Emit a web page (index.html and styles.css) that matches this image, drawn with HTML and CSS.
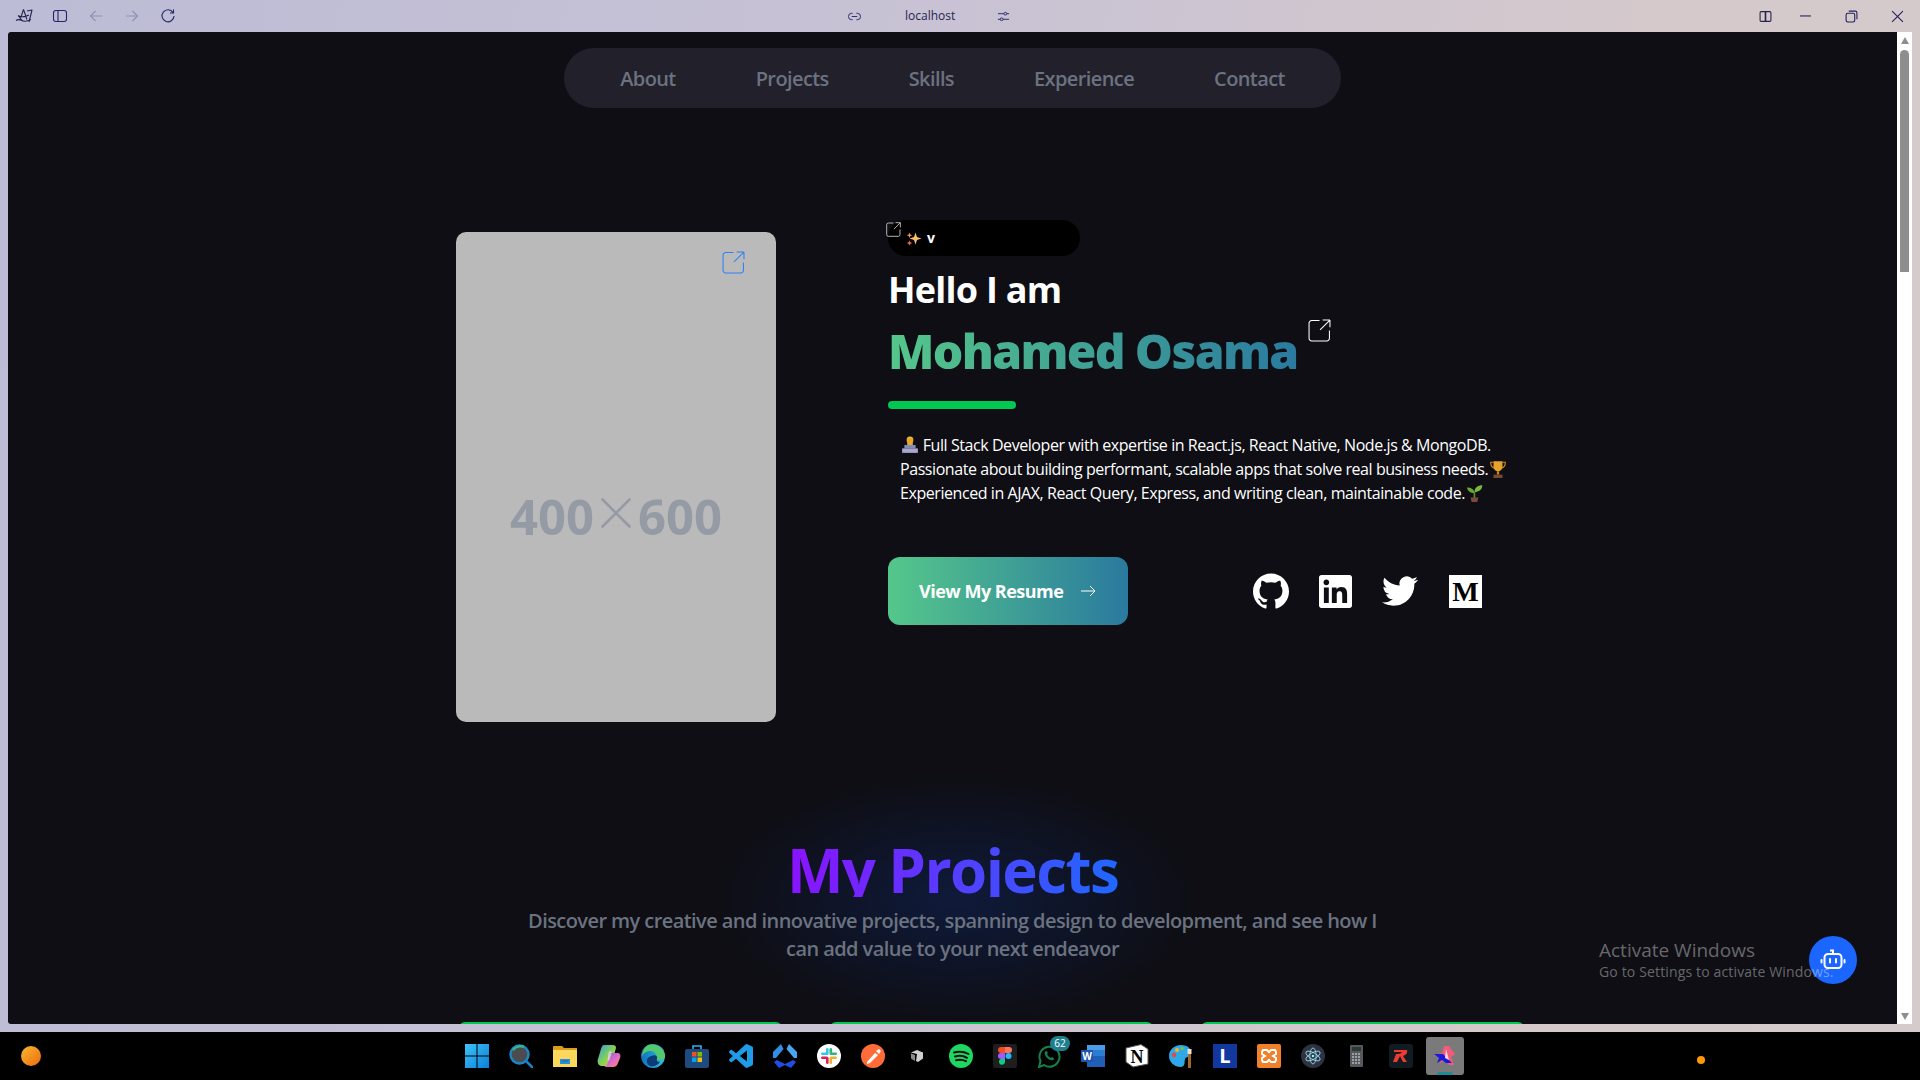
FILE: index.html
```html
<!DOCTYPE html>
<html lang="en">
<head>
<meta charset="utf-8">
<title>Mohamed Osama</title>
<link rel="stylesheet" href="styles.css">
</head>
<body>
<div class="window">
  <header class="titlebar">
    <div class="tb-left">
      <span class="tcell"><svg class="ti-logo" viewBox="0 0 18 16"><path d="M1 12.500c2-1.500 4-1 6 0s5 1 9-1M3 7.500l5 6M8.500 1.500L5 12M8.500 1.500l3.500 10M12 3l5-1-3 12M3 7.500c3 2 6 2 11-.5" fill="none" stroke="#25254f" stroke-width="1.100" stroke-linejoin="round"/></svg></span>
      <span class="tcell"><svg class="ti" viewBox="0 0 16 16"><rect x="1.500" y="2.500" width="13" height="11" rx="2.500" fill="none" stroke="#25256a" stroke-width="1.100"/><path d="M6 2.500v11" stroke="#25256a" stroke-width="1.100"/></svg></span>
      <span class="tcell"><svg class="ti" viewBox="0 0 16 16"><path d="M14 8H2.500M7.500 3L2.500 8l5 5" fill="none" stroke="#8f8fb5" stroke-width="1.100"/></svg></span>
      <span class="tcell"><svg class="ti" viewBox="0 0 16 16"><path d="M2 8h11.500M8.500 3l5 5-5 5" fill="none" stroke="#8f8fb5" stroke-width="1.100"/></svg></span>
      <span class="tcell"><svg class="ti" viewBox="0 0 16 16"><path d="M13 4.500A6 6 0 1 0 14 8M13.500 1.500v3.500H10" fill="none" stroke="#25256a" stroke-width="1.100"/></svg></span>
    </div>
    <div class="tb-center">
      <svg class="ti-s" viewBox="0 0 14 14"><path d="M5 3.500H4a3.500 3.500 0 0 0 0 7h1M9 3.500h1a3.500 3.500 0 0 1 0 7H9M4 7h6" fill="none" stroke="#25256a" stroke-width="1"/></svg>
      <span class="host">localhost</span>
      <svg class="ti-s" viewBox="0 0 14 14"><path d="M1 4h6.500M10.500 4H13M1 10h2.500M6.500 10H13" stroke="#25256a" stroke-width="1"/><circle cx="9" cy="4" r="1.500" fill="none" stroke="#25256a"/><circle cx="5" cy="10" r="1.500" fill="none" stroke="#25256a"/></svg>
    </div>
    <div class="tb-right">
      <span class="wcell wcell-first"><svg class="ti-s" viewBox="0 0 12 12"><rect x="1" y="1.500" width="10" height="9" rx="1" fill="none" stroke="#25254f"/><path d="M6 1.500v9" stroke="#25254f" stroke-width="1.500"/></svg></span>
      <span class="wcell"><svg class="ti-s" viewBox="0 0 12 12"><path d="M1 5.500h10" stroke="#20205f"/></svg></span>
      <span class="wcell"><svg class="ti-s" viewBox="0 0 12 12"><rect x="1" y="3" width="8" height="8" rx="1.500" fill="none" stroke="#20205f"/><path d="M3.500 1h6a1.500 1.500 0 0 1 1.500 1.500v6" fill="none" stroke="#20205f"/></svg></span>
      <span class="wcell"><svg class="ti-s" viewBox="0 0 12 12"><path d="M1 1l10 10M11 1L1 11" stroke="#20205f"/></svg></span>
    </div>
  </header>

  <div class="frame">
    <div class="viewport">
      <nav class="nav">
        <a>About</a><a>Projects</a><a>Skills</a><a>Experience</a><a>Contact</a>
      </nav>

      <section class="hero">
        <div class="photo">
          <svg class="ext ext-photo" viewBox="0 0 22 22"><path d="M11 1.500H3.500a2.500 2.500 0 0 0-2.500 2.500v14.500a2.500 2.500 0 0 0 2.500 2.500h14.500a2.500 2.500 0 0 0 2.500-2.500V11M21 1h-7M21 1v7M21 1L11.500 10.500" fill="none" stroke="#2f80f5" stroke-width="1"/></svg>
          <div class="ph-text"><span>400</span><svg class="ph-x" viewBox="0 0 30 30"><path d="M1.500 1.500l27 27M28.500 1.500l-27 27" stroke="#959ba5" stroke-width="2.600" stroke-linecap="round"/></svg><span>600</span></div>
        </div>
        <div class="intro">
          <div class="badge">
            <svg class="ext ext-badge" viewBox="0 0 22 22"><path d="M11 1.500H3.500a2.500 2.500 0 0 0-2.500 2.500v14.500a2.500 2.500 0 0 0 2.500 2.500h14.500a2.500 2.500 0 0 0 2.500-2.500V11M21 1h-7M21 1v7M21 1L11.500 10.500" fill="none" stroke="#c9c9c9" stroke-width="1.300"/></svg>
            <svg class="sparkle" viewBox="0 0 16 14"><path d="M9.500 1l1.500 4.500L15.500 7l-4.500 1.500L9.500 13 8 8.500 3.500 7 8 5.500z" fill="#fbbf6a"/><path d="M3.500 1l.8 2 2 .8-2 .8-.8 2-.8-2-2-.8 2-.8z" fill="#f5955a"/><path d="M3.500 9l.8 1.800 1.800.8-1.800.8-.8 1.600-.8-1.600-1.800-.8 1.800-.8z" fill="#f26f45"/></svg>
            <span class="badge-text">v</span>
          </div>
          <h2 class="hello">Hello I am</h2>
          <div class="name-row">
            <h1 class="name">Mohamed Osama</h1>
            <svg class="ext ext-name" viewBox="0 0 22 22"><path d="M11 1.500H3.500a2.500 2.500 0 0 0-2.500 2.500v14.500a2.500 2.500 0 0 0 2.500 2.500h14.500a2.500 2.500 0 0 0 2.500-2.500V11M21 1h-7M21 1v7M21 1L11.500 10.500" fill="none" stroke="#fff" stroke-width="1"/></svg>
          </div>
          <div class="rule"></div>
          <p class="bio">
            <span class="line"><svg class="emoji" viewBox="0 0 16 16"><circle cx="8" cy="3.500" r="3" fill="#f0b83c"/><path d="M5.500 2h5v6h-5z" fill="#e8a62c"/><path d="M3 8h10v3H3z" fill="#7d8fb5"/><path d="M1 11h14v4H1z" fill="#a9a6cf"/></svg> Full Stack Developer with expertise in React.js, React Native, Node.js &amp; MongoDB.</span>
            <span class="line">Passionate about building performant, scalable apps that solve real business needs.<svg class="emoji" viewBox="0 0 16 16"><path d="M4 1h8v5a4 4 0 0 1-8 0z" fill="#e8a32a"/><path d="M4 2H1.500c0 3 1 4.500 3 5M12 2h2.500c0 3-1 4.500-3 5" fill="none" stroke="#d18d20"/><path d="M7 10h2v3H7z" fill="#c98a20"/><path d="M4 13h8v3H4z" fill="#7a4a30"/></svg></span>
            <span class="line">Experienced in AJAX, React Query, Express, and writing clean, maintainable code.<svg class="emoji" viewBox="0 0 16 16"><path d="M7.500 13V7" stroke="#5e8a2c" stroke-width="1.500"/><path d="M7.500 8C7 4 4 3 1 3c0 3 3 5 6.500 5z" fill="#6aa52e"/><path d="M7.500 7c0-4 3-6 7-6 0 4-3 6-7 6z" fill="#7cb838"/><path d="M4 12h7l-1 4H5z" fill="#7a4a3a"/></svg></span>
          </p>
          <div class="actions">
            <a class="resume">View My Resume<svg class="arrow" viewBox="0 0 16 12"><path d="M1 6h14M10 1l5 5-5 5" fill="none" stroke="#fff" stroke-width="1"/></svg></a>
            <div class="socials">
              <svg class="soc soc-gh" viewBox="0 0 24 24"><path fill="#fff" d="M12 .297c-6.63 0-12 5.373-12 12 0 5.303 3.438 9.8 8.205 11.385.6.113.82-.258.82-.577 0-.285-.01-1.04-.015-2.04-3.338.724-4.042-1.61-4.042-1.61C4.422 18.07 3.633 17.7 3.633 17.7c-1.087-.744.084-.729.084-.729 1.205.084 1.838 1.236 1.838 1.236 1.07 1.835 2.809 1.305 3.495.998.108-.776.417-1.305.76-1.605-2.665-.3-5.466-1.332-5.466-5.93 0-1.31.465-2.38 1.235-3.22-.135-.303-.54-1.523.105-3.176 0 0 1.005-.322 3.3 1.23.96-.267 1.98-.399 3-.405 1.02.006 2.04.138 3 .405 2.28-1.552 3.285-1.23 3.285-1.23.645 1.653.24 2.873.12 3.176.765.84 1.23 1.91 1.23 3.22 0 4.61-2.805 5.625-5.475 5.92.42.36.81 1.096.81 2.22 0 1.606-.015 2.896-.015 3.286 0 .315.21.69.825.57C20.565 22.092 24 17.592 24 12.297c0-6.627-5.373-12-12-12"/></svg>
              <svg class="soc soc-in" viewBox="0 0 24 24"><path fill="#fff" d="M20.447 20.452h-3.554v-5.569c0-1.328-.027-3.037-1.852-3.037-1.853 0-2.136 1.445-2.136 2.939v5.667H9.351V9h3.414v1.561h.046c.477-.9 1.637-1.85 3.37-1.85 3.601 0 4.267 2.37 4.267 5.455v6.286zM5.337 7.433c-1.144 0-2.063-.926-2.063-2.065 0-1.138.92-2.063 2.063-2.063 1.14 0 2.064.925 2.064 2.063 0 1.139-.925 2.065-2.064 2.065zm1.782 13.019H3.555V9h3.564v11.452zM22.225 0H1.771C.792 0 0 .774 0 1.729v20.542C0 23.227.792 24 1.771 24h20.451C23.2 24 24 23.227 24 22.271V1.729C24 .774 23.2 0 22.222 0h.003z"/></svg>
              <svg class="soc soc-tw" viewBox="0 0 24 24"><path fill="#fff" d="M23.953 4.57a10 10 0 01-2.825.775 4.958 4.958 0 002.163-2.723c-.951.555-2.005.959-3.127 1.184a4.92 4.92 0 00-8.384 4.482C7.69 8.095 4.067 6.13 1.64 3.162a4.822 4.822 0 00-.666 2.475c0 1.71.87 3.213 2.188 4.096a4.904 4.904 0 01-2.228-.616v.06a4.923 4.923 0 003.946 4.827 4.996 4.996 0 01-2.212.085 4.936 4.936 0 004.604 3.417 9.867 9.867 0 01-6.102 2.105c-.39 0-.779-.023-1.17-.067a13.995 13.995 0 007.557 2.209c9.053 0 13.998-7.496 13.998-13.985 0-.21 0-.42-.015-.63A9.935 9.935 0 0024 4.59z"/></svg>
              <span class="soc-md">M</span>
            </div>
          </div>
        </div>
      </section>

      <section class="projects">
        <h2 class="proj-title">My Projects</h2>
        <p class="proj-sub">Discover my creative and innovative projects, spanning design to development, and see how I<br>can add value to your next endeavor</p>
        <div class="cards"><div class="card"></div><div class="card"></div><div class="card"></div></div>
      </section>

      <button class="bot" aria-label="Assistant"><svg viewBox="0 0 28 28"><path d="M14 8V4.500h-3" fill="none" stroke="#fff" stroke-width="2"/><rect x="5.500" y="8" width="17" height="14" rx="3.500" fill="none" stroke="#fff" stroke-width="2"/><path d="M11 13v3.500M17 13v3.500M2.500 14v2.500M25.500 14v2.500" stroke="#fff" stroke-width="2" stroke-linecap="round"/></svg></button>
      <div class="watermark"><div class="wm1">Activate Windows</div><div class="wm2">Go to Settings to activate Windows.</div></div>
    </div>
    <div class="scrollbar">
      <span class="sb-up"></span>
      <span class="sb-thumb"></span>
      <span class="sb-down"></span>
    </div>
  </div>
</div>

<footer class="taskbar">
  <span class="orb"></span>
  <div class="apps">
    <span class="app"><svg viewBox="0 0 24 24"><defs><linearGradient id="win" x1="0" y1="0" x2="1" y2="1"><stop offset="0" stop-color="#3fc3f7"/><stop offset="1" stop-color="#0a7fd8"/></linearGradient></defs><path fill="url(#win)" d="M0 0h11.500v11.500H0zM12.500 0H24v11.500H12.500zM0 12.500h11.500V24H0zM12.500 12.500H24V24H12.500z"/></svg></span>
    <span class="app"><svg viewBox="0 0 24 24"><circle cx="10.500" cy="10.500" r="9" fill="#4b4b50" stroke="#1b86c8" stroke-width="2.400"/><path d="M4 6a9 9 0 0 1 11-3" fill="none" stroke="#35b88a" stroke-width="2.400"/><path d="M17 17l6 6" stroke="#1b7fc0" stroke-width="2.600" stroke-linecap="round"/></svg></span>
    <span class="app"><svg viewBox="0 0 24 24"><path d="M0 3a1 1 0 0 1 1-1h8l2 2h13v4H0z" fill="#d69e1a"/><path d="M0 6h24v17H0z" fill="#fbd75b"/><path d="M7 15h10v5H7z" fill="#2b8fd8"/><path d="M9 17h6" stroke="#156bb0"/></svg></span>
    <span class="app"><svg viewBox="0 0 24 24"><defs><linearGradient id="cop" x1="0" y1="0" x2="1" y2="1"><stop offset="0" stop-color="#2f9be9"/><stop offset=".5" stop-color="#7fd05a"/><stop offset="1" stop-color="#f5c82e"/></linearGradient><linearGradient id="cop2" x1="0" y1="0" x2="1" y2="1"><stop offset="0" stop-color="#7a5cf0"/><stop offset=".6" stop-color="#e86ec0"/><stop offset="1" stop-color="#f8945a"/></linearGradient></defs><path fill="url(#cop)" d="M7 1h9c2 0 3 1 3 3l-4 14c-1 3-3 4-5 4H4c-3-1-4-4-3-7L4 5c.5-2 1.500-4 3-4z"/><path fill="url(#cop2)" d="M12 9h8c3 0 4 2 3 5l-2 5c-1 3-3 4-5 4H7c2-1 3-2 4-5l2-7z"/><path d="M13 7c1 0 2 1 1.500 3l-2 6c-.5 1-1.500 1-2 0l1-7c.2-1 .8-2 1.500-2z" fill="#f8f0ff" opacity=".55"/></svg></span>
    <span class="app"><svg viewBox="0 0 24 24"><defs><linearGradient id="edge" x1="0" y1="0" x2="1" y2="0"><stop offset="0" stop-color="#0f6fc0"/><stop offset="1" stop-color="#35c1d8"/></linearGradient></defs><circle cx="12" cy="12" r="12" fill="url(#edge)"/><path d="M7 1c8-2 16 3 17 11 0 3-3 4-6 4-2 0-3-1-2-3 0-3-3-6-7-6-5 0-8 4-8 7C1 8 3 3 7 1z" fill="#52c96e"/><path d="M10 12c4-2 7 0 6 3-1 2 1 3 3 3-2 3-6 5-10 4-4-2-5-8 1-10z" fill="#0a3c78"/></svg></span>
    <span class="app"><svg viewBox="0 0 24 24"><path d="M8 5V2h8v3" fill="none" stroke="#33aef0" stroke-width="1.600"/><rect y="5" width="24" height="19" rx="2" fill="#1e4a80"/><path d="M7 8h4.500v4.500H7z" fill="#f25022"/><path d="M12.500 8H17v4.500h-4.500z" fill="#7fba00"/><path d="M7 13.500h4.500V18H7z" fill="#00a4ef"/><path d="M12.500 13.500H17V18h-4.500z" fill="#ffb900"/></svg></span>
    <span class="app"><svg viewBox="0 0 24 24"><path fill="#1d9de8" d="M23.150 2.587L18.210.21a1.494 1.494 0 0 0-1.705.29l-9.460 8.630-4.120-3.128a.999.999 0 0 0-1.276.057L.327 7.261A1 1 0 0 0 .326 8.740L3.899 12 .326 15.260a1 1 0 0 0 .001 1.479L1.650 17.940a.999.999 0 0 0 1.276.057l4.120-3.128 9.460 8.630a1.492 1.492 0 0 0 1.704.29l4.942-2.377A1.500 1.500 0 0 0 24 20.060V3.939a1.500 1.500 0 0 0-.85-1.352zm-5.146 14.861L10.826 12l7.178-5.448v10.896z"/></svg></span>
    <span class="app"><svg viewBox="0 0 24 24"><path d="M8 0l2.500 5L3 14H0V8z" fill="#2f8fe8"/><path d="M16 0l-2.500 5L21 14h3V8z" fill="#4aa5ee"/><path d="M4 16l8 4 8-4 3 2-5 6-6-3-6 3-5-6z" fill="#1e4fe0"/></svg></span>
    <span class="app"><svg viewBox="0 0 24 24"><circle cx="12" cy="12" r="12" fill="#fff"/><rect x="9" y="4" width="2.600" height="7" rx="1.300" fill="#36c5f0"/><rect x="4" y="8.500" width="7" height="2.600" rx="1.300" fill="#36c5f0"/><rect x="12.500" y="4" width="2.600" height="7" rx="1.300" fill="#2eb67d"/><rect x="13" y="8.500" width="7" height="2.600" rx="1.300" fill="#2eb67d"/><rect x="12.500" y="13" width="2.600" height="7" rx="1.300" fill="#ecb22e"/><rect x="13" y="12.500" width="7" height="2.600" rx="1.300" fill="#ecb22e"/><rect x="9" y="13" width="2.600" height="7" rx="1.300" fill="#e01e5a"/><rect x="4" y="12.500" width="7" height="2.600" rx="1.300" fill="#e01e5a"/></svg></span>
    <span class="app"><svg viewBox="0 0 24 24"><circle cx="12" cy="12" r="12" fill="#ff6c37"/><path d="M6 18l8-9 3 2-8 8-3 1zM15 7l3-2 2 2-2 3z" fill="#fff"/></svg></span>
    <span class="app app-sm"><svg viewBox="0 0 12 12"><path d="M6 0l6 2.500v6L7 12l-2-1 1-7-6-1.500z" fill="#cfcfcf"/><path d="M0 3.500l4 1.500v6L0 8.500z" fill="#8a8a8a"/></svg></span>
    <span class="app"><svg viewBox="0 0 24 24"><circle cx="12" cy="12" r="12" fill="#1ed760"/><path d="M5 8.500c5-1.500 10-1 14.500 1.500M6 12.500c4-1 8.500-.8 12 1.300M7 16.200c3.500-.8 7-.6 10 1" fill="none" stroke="#111" stroke-width="2" stroke-linecap="round"/></svg></span>
    <span class="app"><svg viewBox="0 0 24 24"><rect width="24" height="24" rx="2" fill="#1e1e1e"/><path d="M8 3h4v6H8a3 3 0 0 1 0-6z" fill="#f24e1e"/><path d="M12 3h4a3 3 0 0 1 0 6h-4z" fill="#ff7262"/><path d="M8 9h4v6H8a3 3 0 0 1 0-6z" fill="#a259ff"/><circle cx="15.500" cy="12" r="3" fill="#1abcfe"/><path d="M8 15h4v3a3 3 0 1 1-4-3z" fill="#0acf83"/></svg></span>
    <span class="app app-wa"><svg viewBox="0 0 24 24"><path d="M2 23l1.500-6A10 10 0 1 1 7 21z" fill="none" stroke="#17804d" stroke-width="2"/><path d="M8 8c1-2 2-1 3 1l-1 1c1 2 2 3 4 4l1-1c2 1 3 2 1 3-3 2-10-5-8-8z" fill="#17804d"/></svg><span class="wa-count">62</span></span>
    <span class="app"><svg viewBox="0 0 24 24"><path d="M6 1h18v22H6z" fill="#1f5fb5"/><path d="M6 1h18v5.500H6z" fill="#4a9be8"/><path d="M6 6.500h18V12H6z" fill="#2b7cd3"/><path d="M0 6h12v12H0z" fill="#1a55b0"/><text x="6" y="16" class="word-w">W</text></svg></span>
    <span class="app"><svg viewBox="0 0 24 24"><path d="M1 4l15-3.500 7 4.500v15l-15 3-7-5z" fill="#fff" stroke="#555"/><text x="12" y="19" class="notion-n">N</text></svg></span>
    <span class="app"><svg viewBox="0 0 24 24"><path d="M12 1c7 0 11 4 10 9-1 4-5 2-6 5s1 7-4 8C5 23 0 18 0 12S5 1 12 1z" fill="#2ea8e6"/><circle cx="5" cy="11" r="2.200" fill="#f2453d"/><circle cx="8" cy="6" r="2" fill="#f5b32a"/><circle cx="13" cy="4.500" r="1.800" fill="#7cc14a"/><path d="M19 9h3v15h-3z" fill="#a06a2c"/><path d="M18.500 5h4v5h-4z" fill="#e8e2d0"/></svg></span>
    <span class="app app-l">L</span>
    <span class="app"><svg viewBox="0 0 24 24"><rect width="24" height="24" rx="2" fill="#f0802a"/><path d="M6 6h4l2 2 2-2h4l1 2v2l-3 2 3 2v2l-1 2h-4l-2-2-2 2H6l-1-2v-2l3-2-3-2V8z" fill="none" stroke="#fff" stroke-width="2"/></svg></span>
    <span class="app"><svg viewBox="0 0 24 24"><circle cx="12" cy="12" r="12" fill="#2f3241"/><g fill="none" stroke="#9feaf9" stroke-width=".8"><ellipse cx="12" cy="12" rx="8" ry="3.200" transform="rotate(30 12 12)"/><ellipse cx="12" cy="12" rx="8" ry="3.200" transform="rotate(90 12 12)"/><ellipse cx="12" cy="12" rx="8" ry="3.200" transform="rotate(150 12 12)"/></g><circle cx="12" cy="12" r="1.300" fill="#9feaf9"/></svg></span>
    <span class="app"><svg viewBox="0 0 24 24"><rect x="5" y="1" width="13" height="22" rx="1" fill="#55585c"/><path d="M7 3h9v4H7z" fill="#2d3a2f"/><path d="M7 10h9M7 13h9M7 16h9M7 19h9" stroke="#b5b8ba" stroke-width="1.500" stroke-dasharray="2 1"/></svg></span>
    <span class="app"><svg viewBox="0 0 24 24"><rect width="24" height="24" rx="3" fill="#101b22"/><path d="M5 6h13c1 3-1 5-4 6l4 6h-4l-3-6-3 6H4l3-8c2 0 5 0 6-2H5z" fill="#f03a30"/></svg></span>
    <span class="app app-active"><svg viewBox="0 0 24 24"><path d="M11 2h5l6 8-4 3 3 8h-5l-3-5-6 3 1-5-7-3 8-2z" fill="#f25c7a"/><path d="M1 10h9l6 6 3 3h-6l-4-3-5 3 2-5z" fill="#1a1ad8"/><path d="M13 5l3 11-4-2z" fill="#fbd6de"/></svg><i class="active-bar"></i></span>
  </div>
  <span class="tray-dot"></span>
</footer>
</body>
</html>
```
FILE: styles.css
```css
* { box-sizing: border-box; }
html, body { margin: 0; height: 100%; overflow: hidden; background: #000; }
body { font-family: "Open Sans", "Noto Sans", sans-serif; display: flex; flex-direction: column; width: 1920px; height: 1080px; }

.window { height: 1032px; display: flex; flex-direction: column; padding-bottom: 8px; background: linear-gradient(100deg, #bcbcd6 0%, #c8c2d4 45%, #d5c9cb 80%, #d5cbcb 100%); }
.titlebar { height: 32px; flex: none; display: grid; grid-template-columns: 848px auto 1fr; align-items: center; }
.tb-left { display: flex; padding-left: 6px; }
.tcell { width: 36px; display: flex; justify-content: center; align-items: center; }
.ti { width: 16px; height: 16px; display: block; }
.ti-logo { width: 18px; height: 16px; display: block; }
.ti-s { width: 13px; height: 13px; display: block; }
.tb-center { display: flex; align-items: center; }
.host { font-size: 12px; color: #25254f; margin: 0 42px 0 44px; line-height: 16px; }
.tb-right { display: flex; justify-content: flex-end; }
.wcell { width: 46px; display: flex; justify-content: center; }
.wcell-first { width: 34px; }

.frame { flex: 1; display: flex; min-height: 0; padding: 0 8px; }
.viewport { position: relative; flex: 1; min-width: 0; overflow: hidden; background: #0e0e14; border-top-left-radius: 3px; border-bottom-left-radius: 3px; }
.scrollbar { width: 15px; background: #fff; display: flex; flex-direction: column; align-items: center; }
.sb-up { width: 0; height: 0; margin-top: 5px; border-left: 4.500px solid transparent; border-right: 4.500px solid transparent; border-bottom: 7px solid #8e8e8e; }
.sb-thumb { width: 9px; height: 222px; margin-top: 6px; background: #8e8e8e; border-radius: 5px 5px 0 0; }
.sb-down { width: 0; height: 0; margin-top: auto; margin-bottom: 4px; border-left: 4.500px solid transparent; border-right: 4.500px solid transparent; border-top: 7px solid #8e8e8e; }

.nav { width: max-content; margin: 16px auto 0; height: 60px; padding: 0 56px; display: flex; align-items: center; gap: 80px; border-radius: 30px; background: #22212b; color: #6b7280; font-size: 20px; font-weight: 600; letter-spacing: -0.6px; }

.hero { display: flex; align-items: flex-start; margin: 112px 0 0 448px; }
.photo { position: relative; width: 320px; height: 490px; margin-top: 12px; border-radius: 10px; background: #bababa; display: flex; align-items: center; justify-content: center; }
.ext { display: block; }
.ext-photo { position: absolute; width: 23px; height: 23px; top: 19px; left: 266px; }
.ph-text { display: flex; align-items: center; gap: 7px; margin-top: 78px; color: #959ba5; font-size: 49px; font-weight: 700; line-height: 60px; }
.ph-x { width: 30px; height: 30px; margin-top: -6px; }

.intro { margin-left: 112px; }
.badge { position: relative; width: 192px; height: 36px; border-radius: 18px; background: #000; display: flex; align-items: center; padding-left: 18px; color: #fff; font-size: 14px; font-weight: 700; }
.ext-badge { position: absolute; width: 15px; height: 15px; left: -2px; top: 2px; }
.sparkle { width: 16px; height: 15px; margin-top: 1px; }
.badge-text { margin-left: 5px; line-height: 16px; }
.hello { margin: 12px 0 0; font-size: 36px; line-height: 44px; font-weight: 700; color: #fff; letter-spacing: -0.75px; }
.name-row { position: relative; width: max-content; margin-top: 9px; }
.name { margin: 0; height: 60px; font-size: 48px; line-height: 60px; font-weight: 800; letter-spacing: -1.65px; background: linear-gradient(90deg, #55c78a, #2a7a9f); -webkit-background-clip: text; background-clip: text; color: transparent; }
.ext-name { position: absolute; width: 23px; height: 23px; top: -2px; left: 420px; }
.rule { width: 128px; height: 8px; margin-top: 20px; border-radius: 4px; background: #00c853; }
.bio { margin: 24px 0 0; padding-left: 12px; font-size: 16px; line-height: 24px; color: #fff; letter-spacing: -0.43px; }
.line { display: block; white-space: nowrap; }
.emoji { width: 18px; height: 18px; vertical-align: -3px; margin-left: 1px; }
.actions { display: flex; align-items: center; margin-top: 52px; }
.resume { width: 240px; height: 68px; border-radius: 12px; display: flex; align-items: center; padding-left: 31px; background: linear-gradient(90deg, #55c78a, #2a7a9f); color: #fff; font-size: 18px; font-weight: 700; letter-spacing: -0.5px; }
.arrow { width: 16px; height: 12px; margin-left: 17px; }
.socials { display: flex; align-items: center; margin-left: 125px; }
.soc { display: block; }
.soc-gh { width: 36px; height: 36px; }
.soc-in { width: 33px; height: 33px; margin-left: 30px; }
.soc-tw { width: 36px; height: 36px; margin-left: 30px; }
.soc-md { width: 33px; height: 33px; margin-left: 31px; background: #fff; color: #000; font-family: "Liberation Serif", serif; font-weight: 700; font-size: 28px; line-height: 33px; text-align: center; }

.projects { height: 400px; padding-top: 115px; text-align: center; background: radial-gradient(ellipse 240px 125px at 948px 178px, rgba(16, 40, 100, 0.48), rgba(16, 40, 100, 0) 100%); }
.proj-title { width: max-content; margin: 0 auto; height: 60px; overflow: hidden; font-size: 60px; line-height: 66px; font-weight: 700; letter-spacing: -1.6px; background: linear-gradient(90deg, #8b12ff, #2068ff); -webkit-background-clip: text; background-clip: text; color: transparent; }
.proj-sub { margin: 10px 0 0; font-size: 20px; line-height: 28px; font-weight: 600; color: #6b7280; letter-spacing: -0.57px; }
.cards { display: flex; gap: 48px; margin: 59px 0 0 451px; }
.card { width: 323px; height: 200px; border-top: 2px solid #00c853; border-radius: 6px 6px 0 0; }

.watermark { position: absolute; left: 1591px; top: 905px; color: rgba(255, 255, 255, 0.38); white-space: nowrap; }
.wm1 { font-size: 19px; line-height: 26px; }
.wm2 { font-size: 14px; line-height: 18px; letter-spacing: 0.15px; }
.bot { position: absolute; right: 40px; bottom: 40px; width: 48px; height: 48px; padding: 10px; border: 0; border-radius: 50%; background: #1a66ff; }
.bot svg { display: block; width: 28px; height: 28px; }

.taskbar { height: 48px; flex: none; display: flex; align-items: center; background: #000; }
.orb { width: 20px; height: 20px; margin-left: 21px; border-radius: 50%; background: linear-gradient(135deg, #f7b92f, #ef6a10); }
.apps { display: flex; align-items: center; margin-left: 414px; }
.app { position: relative; width: 44px; height: 24px; display: flex; justify-content: center; align-items: center; }
.app svg { width: 24px; height: 24px; display: block; }
.app-sm svg { width: 12px; height: 12px; }
.wa-count { position: absolute; left: 23px; top: -8px; width: 20px; height: 15px; border-radius: 8px; background: #1f7f8f; color: #fff; font-size: 10px; line-height: 15px; text-align: center; }
.word-w { font-size: 10px; font-weight: 700; fill: #fff; text-anchor: middle; }
.notion-n { font-family: "Liberation Serif", serif; font-size: 18px; font-weight: 700; fill: #000; text-anchor: middle; }
.app-l { color: #fff; font-size: 20px; font-weight: 700; line-height: 24px; background: #12389f; width: 24px; margin: 0 10px; }
.app-active { height: 38px; width: 38px; margin: 0 3px; border-radius: 3px; background: #7a7a7a; }
.active-bar { position: absolute; left: 11px; bottom: 0; width: 16px; height: 3px; background: #1f8a9c; border-radius: 2px; }
.tray-dot { width: 8px; height: 8px; margin: 8px 0 0 230px; border-radius: 50%; background: #ff9800; }
```
